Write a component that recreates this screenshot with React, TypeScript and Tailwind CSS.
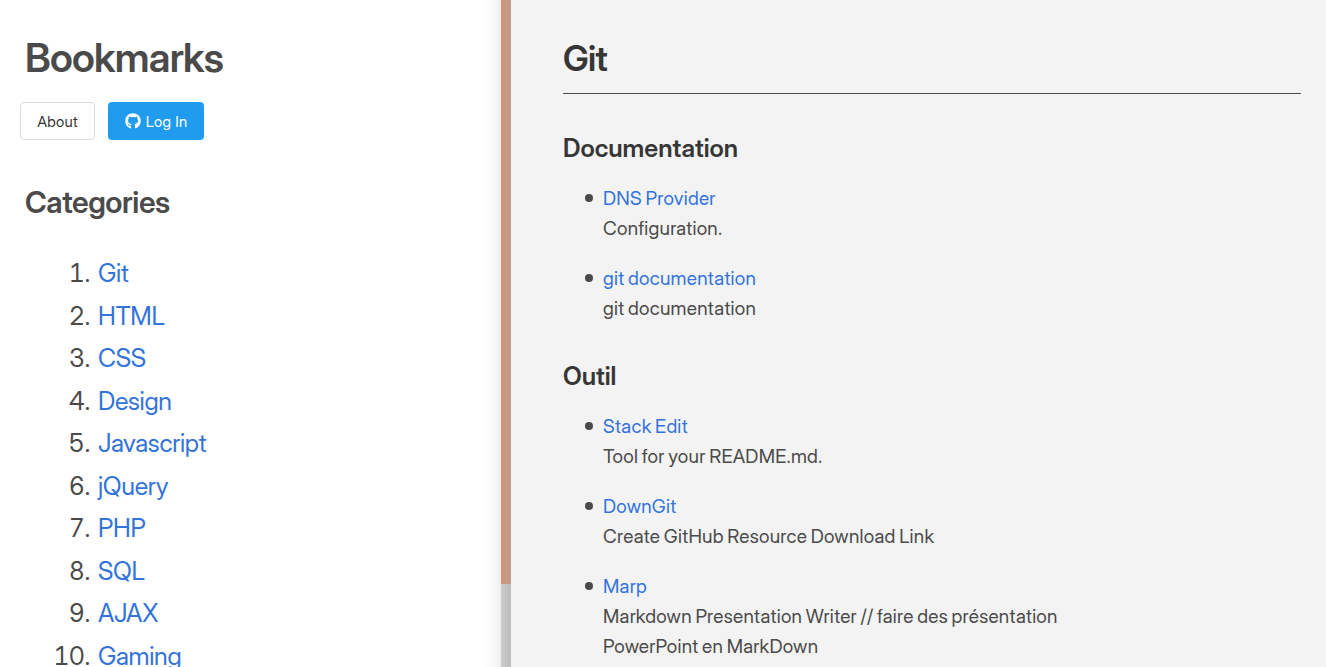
import { FaGithub } from "react-icons/fa";

const categories = ["Git", "HTML", "CSS", "Design", "Javascript", "jQuery", "PHP", "SQL", "AJAX", "Gaming", "Tools"];

type Item = { name: string; text: string };

const sections: { title: string; items: Item[] }[] = [
  {
    title: "Documentation",
    items: [
      { name: "DNS Provider", text: "Configuration." },
      { name: "git documentation", text: "git documentation" },
    ],
  },
  {
    title: "Outil",
    items: [
      { name: "Stack Edit", text: "Tool for your README.md." },
      { name: "DownGit", text: "Create GitHub Resource Download Link" },
      { name: "Marp", text: "Markdown Presentation Writer // faire des présentation PowerPoint en MarkDown" },
    ],
  },
];

function Sidebar() {
  return (
    <aside className="h-full w-[501px] shrink-0 overflow-hidden bg-white pl-[25px]">
      <h1 className="mt-[33px] text-[40px] leading-[50px] font-semibold tracking-[-0.74px]">Bookmarks</h1>
      <div className="mt-[19px] -ml-[5px] flex gap-[13px] text-[15px] tracking-[0.25px]">
        <a href="#about" className="flex h-[38px] w-[75px] items-center justify-center rounded-[4px] border border-[#dbdbdb] pt-[2px] text-[#363636]">
          About
        </a>
        <a href="#login" className="flex h-[38px] w-24 items-center justify-center gap-[5px] rounded-[4px] bg-[#209cee] text-white">
          <FaGithub className="size-4" />
          <span className="pt-[2px]">Log In</span>
        </a>
      </div>
      <h2 className="mt-[42px] text-[30px] leading-10 font-semibold tracking-[-0.42px]">Categories</h2>
      <ol className="mt-[30px] text-[25px] leading-[42.5px] tracking-[-0.3px]">
        {categories.map((name, i) => (
          <li key={name} className="flex gap-2">
            <span className="w-[65px] text-right tracking-[-0.8px] tabular-nums">{i + 1}.</span>
            <a href={`#${name}`} className="text-[#3273dc]">{name}</a>
          </li>
        ))}
      </ol>
    </aside>
  );
}

export default function App() {
  return (
    <div className="flex h-[667px] overflow-hidden bg-white font-['Inter_Display','Inter',sans-serif] text-[#4a4a4a] [font-variation-settings:'opsz'_32]">
      <Sidebar />
      <div className="h-full w-[10px] shrink-0 bg-[#dcdcdc]">
        <div className="h-[584px] bg-linear-to-r from-[#df9c7f] to-[#e1bbac]" />
      </div>
      <main className="relative -my-8 flex-1 overflow-hidden bg-[#f3f3f3] pt-8 pr-[25px] pl-[52px] shadow-[0_0_25px_rgba(0,0,0,0.3)]">
        <h2 className="mt-[33px] border-b border-[#4a4a4a] pb-[10px] text-[35px] leading-[50px] font-semibold tracking-[-0.77px] text-[#363636]">
          Git
        </h2>
        {sections.map((section) => (
          <section key={section.title} className="mt-9 first-of-type:mt-[38px]">
            <h3 className="text-[25px] leading-8 font-semibold tracking-[0px] text-[#363636]">{section.title}</h3>
            <ul className="mt-[20px] flex flex-col gap-5 pl-10 text-[19px] leading-[30px] tracking-[0.25px] [word-spacing:-1.4px]">
              {section.items.map((item) => (
                <li key={item.name} className="relative max-w-[500px]">
                  <span className="absolute top-[10px] -left-[18px] size-2 rounded-full bg-[#4a4a4a]" />
                  <a href={`#${item.name}`} className="text-[#3273dc]">{item.name}</a>
                  <p>{item.text}</p>
                </li>
              ))}
            </ul>
          </section>
        ))}
      </main>
    </div>
  );
}
